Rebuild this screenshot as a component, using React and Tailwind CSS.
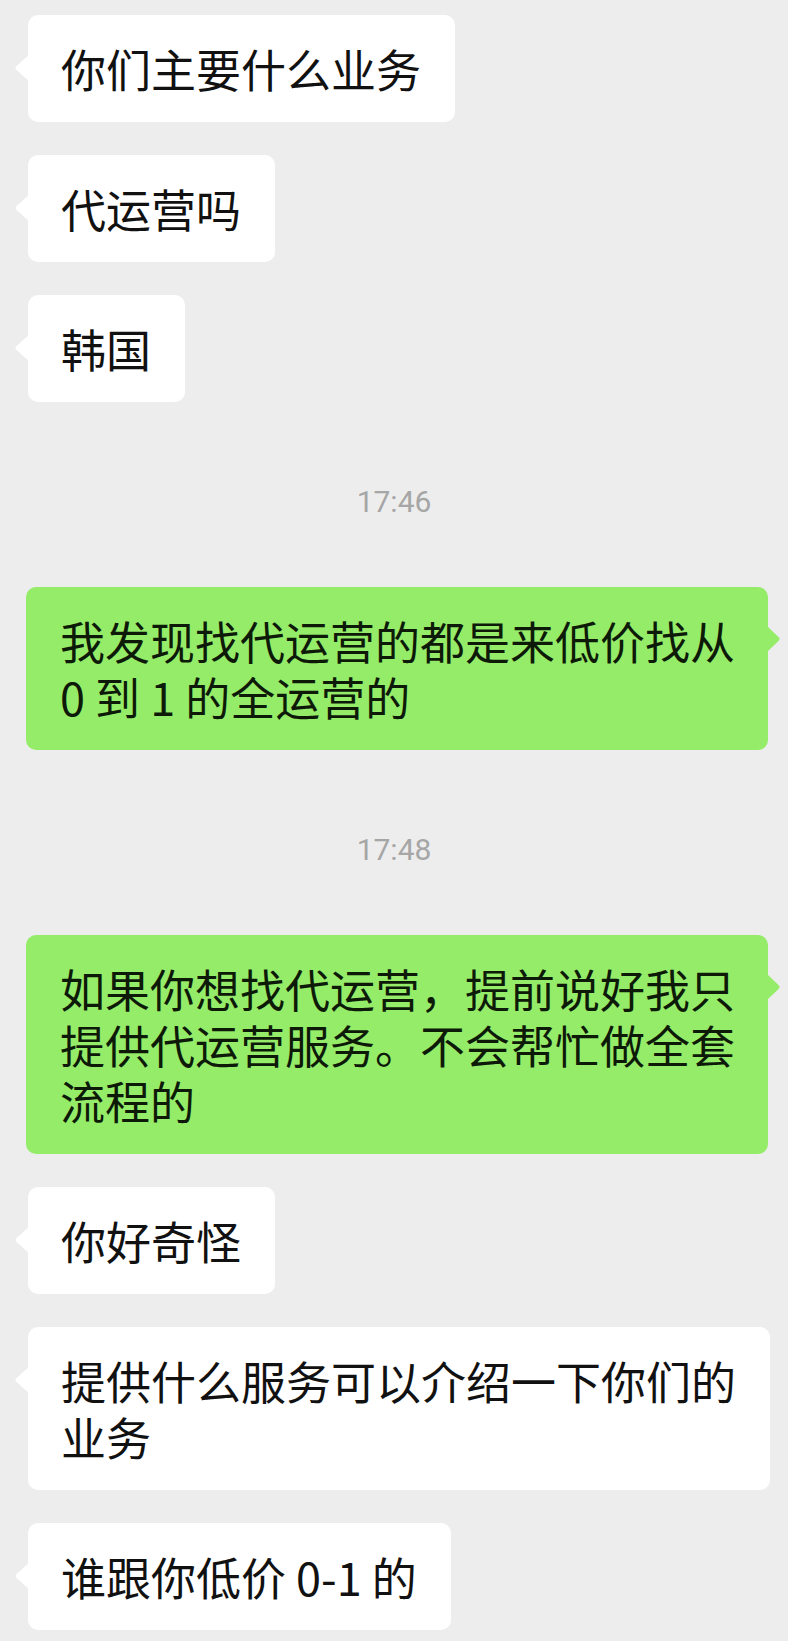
import React from 'react';

const FONT = { fontFamily: '"Noto Sans CJK SC", "Noto Sans", sans-serif' };

const Tail = ({ side }) =>
    side === 'left' ? (
        <svg className="absolute left-[-14px] top-[40px]" width="15" height="26" viewBox="0 0 15 26">
            <path d="M15 0 L2.5 11 Q0.5 13 2.5 15 L15 26 Z" fill="#ffffff" />
        </svg>
    ) : (
        <svg className="absolute right-[-13px] top-[39px]" width="14" height="26" viewBox="0 0 14 26">
            <path d="M0 0 L11.5 11 Q13.5 13 11.5 15 L0 26 Z" fill="#95ec69" />
        </svg>
    );

const Received = ({ children }) => (
    <div className="flex pl-[28px]">
        <div className="relative w-fit max-w-[742px] rounded-[10px] bg-white pl-[33px] pr-[34px] py-[25.5px] text-[45px] leading-[56px] text-[#111111]">
            <Tail side="left" />
            {children}
        </div>
    </div>
);

const Sent = ({ children }) => (
    <div className="flex justify-end pr-[20px]">
        <div className="relative w-fit max-w-[742px] rounded-[10px] bg-[#95ec69] pl-[34px] pr-[32px] py-[25.5px] text-[45px] leading-[56px] text-[#0d1a08]">
            <Tail side="right" />
            {children}
        </div>
    </div>
);

const Time = ({ children }) => (
    <div
        className="h-[119px] pt-[52px] text-center text-[30px] leading-[30px] text-[#a6a6a6]"
        style={{ fontFamily: 'Roboto, "Noto Sans", sans-serif' }}
    >
        {children}
    </div>
);

const App = () => {
    return (
        <div className="min-h-[1641px] w-[788px] overflow-hidden bg-[#ededed] pt-[15px]" style={FONT}>
            <div className="flex flex-col gap-[33px]">
                <Received>你们主要什么业务</Received>
                <Received>代运营吗</Received>
                <Received>韩国</Received>
                <Time>17:46</Time>
                <Sent>我发现找代运营的都是来低价找从0 到 1 的全运营的</Sent>
                <Time>17:48</Time>
                <Sent>如果你想找代运营，提前说好我只提供代运营服务。不会帮忙做全套流程的</Sent>
                <Received>你好奇怪</Received>
                <Received>提供什么服务可以介绍一下你们的业务</Received>
                <Received>谁跟你低价 0-1 的</Received>
            </div>
        </div>
    );
};

export default App;
